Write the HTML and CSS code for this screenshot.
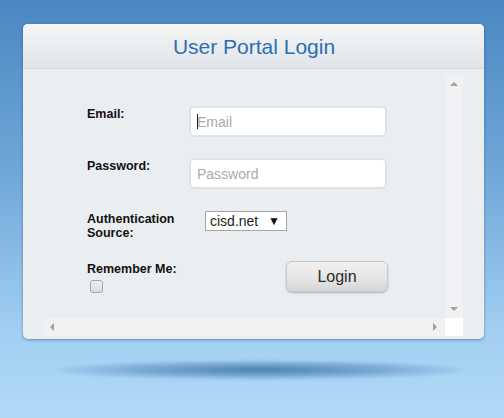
FILE: index.html
```html
<!DOCTYPE html>
<html>
<head>
<meta charset="utf-8">
<link rel="stylesheet" href="styles.css">
</head>
<body>
<div class="stage">
  <div class="card">
    <div class="card-header"><h1 class="title">User Portal Login</h1></div>
    <div class="card-body">
      <div class="scroller">
        <form class="content">
          <div class="row row-email">
            <label class="label">Email:</label>
            <span class="field caret-wrap"><input class="text-input" type="text" placeholder="Email"></span>
          </div>
          <div class="row row-pass">
            <label class="label">Password:</label>
            <span class="field"><input class="text-input" type="password" placeholder="Password"></span>
          </div>
          <div class="row row-auth">
            <label class="label">Authentication<br>Source:</label>
            <span class="field"><span class="select"><span class="select-text">cisd.net</span><span class="select-arrow">▼</span></span></span>
          </div>
          <div class="row row-remember">
            <div class="label">Remember Me:<span class="checkbox"></span></div>
            <span class="field field-btn"><button type="button" class="btn">Login</button></span>
          </div>
        </form>
        <div class="vbar"><span class="arr arr-up"></span><span class="arr arr-down"></span></div>
        <div class="hbar"><span class="arr arr-left"></span><span class="arr arr-right"></span></div>
        <div class="corner"></div>
      </div>
    </div>
  </div>
  <div class="floor-shadow"></div>
</div>
</body>
</html>
```
FILE: styles.css
```css
html, body {
  margin: 0;
  padding: 0;
}
body {
  width: 504px;
  height: 418px;
  overflow: hidden;
  background: linear-gradient(to bottom, #4a87c2 0%, #6fa6d8 40%, #a3cff2 80%, #afdaf8 100%);
  font-family: "Liberation Sans", Arial, sans-serif;
}
.stage {
  padding: 24px 0 0 23px;
}
.card {
  width: 461px;
  height: 315px;
  box-sizing: border-box;
  border-radius: 5px;
  background: #ebeef1;
  box-shadow: 0 1px 3px rgba(20, 50, 90, 0.45);
  overflow: hidden;
}
.card-header {
  height: 44px;
  border-bottom: 1px solid #d3d9df;
  background: linear-gradient(to bottom, #f4f5f7 0%, #e9ecef 60%, #dfe3e7 100%);
  display: flex;
  align-items: center;
  justify-content: center;
}
.title {
  margin: 0;
  font-weight: normal;
  font-size: 21px;
  color: #2f6db3;
  padding-left: 1px;
  padding-top: 2px;
}
.card-body {
  padding: 6px 21px 3px 21px;
}
.scroller {
  display: grid;
  grid-template-columns: 401px 18px;
  grid-template-rows: 243px 18px;
}
.content {
  margin: 0;
  padding: 31px 0 0 43px;
  display: flex;
  flex-direction: column;
}
.row {
  display: grid;
  grid-template-columns: 102px 198px;
  align-items: start;
}
.label {
  font-size: 12.5px;
  font-weight: bold;
  line-height: 14px;
  color: #111;
  padding-top: 1px;
}
.row-pass { margin-top: 21px; }
.row-auth { margin-top: 22px; }
.row-auth .label { padding-top: 1px; }
.row-remember { margin-top: 21px; }
.row-remember .label { padding-top: 1px; }
.field {
  display: block;
}
.caret-wrap {
  position: relative;
}
.caret-wrap::after {
  content: "";
  position: absolute;
  left: 8px;
  top: 8px;
  width: 1px;
  height: 15px;
  background: #222;
}
.text-input {
  display: block;
  width: 198px;
  height: 31px;
  box-sizing: border-box;
  border: 2px solid #e0e3e6;
  border-radius: 5px;
  background: #fff;
  padding: 0 0 0 6px;
  font-family: "Liberation Sans", Arial, sans-serif;
  font-size: 14px;
  color: #333;
  outline: none;
}
.text-input::placeholder {
  color: #a9a9a9;
}
.select {
  margin-left: 16px;
  width: 82px;
  height: 20px;
  box-sizing: border-box;
  border: 1px solid #a6a6a6;
  background: #fff;
  display: flex;
  align-items: center;
  justify-content: space-between;
  padding: 0 6px 0 4px;
  font-size: 14px;
  color: #1e1e1e;
}
.select-arrow {
  font-size: 12px;
  color: #111;
}
.checkbox {
  display: block;
  width: 11px;
  height: 11px;
  margin: 4px 0 0 3px;
  border: 1px solid #a8a8a8;
  border-radius: 3px;
  background: linear-gradient(to bottom, #f0f0f0, #dcdcdc);
}
.field-btn {
  display: flex;
  justify-content: flex-end;
  margin-right: -1px;
}
.btn {
  width: 102px;
  height: 31px;
  border: 1px solid #c9c9c9;
  border-radius: 6px;
  background: linear-gradient(to bottom, #f1f1f1 0%, #e4e4e4 60%, #d6d6d6 100%);
  box-shadow: 0 1px 2px rgba(0, 0, 0, 0.25);
  font-family: "Liberation Sans", Arial, sans-serif;
  font-size: 16px;
  color: #2b2b2b;
  padding: 0;
}
.vbar {
  background: #f0f1f2;
  display: flex;
  flex-direction: column;
  justify-content: space-between;
  align-items: center;
  padding: 7px 0 7px 0;
}
.hbar {
  background: #f0f1f2;
  display: flex;
  justify-content: space-between;
  align-items: center;
  padding: 0 8px 0 6px;
}
.corner {
  background: #fff;
}
.arr {
  display: block;
  width: 0;
  height: 0;
  border-style: solid;
  border-color: transparent;
}
.arr-up {
  border-width: 0 4px 4px 4px;
  border-bottom-color: #a0a0a0;
}
.arr-down {
  border-width: 4px 4px 0 4px;
  border-top-color: #a0a0a0;
}
.arr-left {
  border-width: 4px 4px 4px 0;
  border-right-color: #a0a0a0;
}
.arr-right {
  border-width: 4px 0 4px 4px;
  border-left-color: #a0a0a0;
}
.floor-shadow {
  width: 410px;
  height: 20px;
  margin: 21px 0 0 32px;
  border-radius: 50%;
  background: radial-gradient(ellipse at center, rgba(50, 100, 150, 0.75) 0%, rgba(60, 115, 170, 0.45) 40%, rgba(80, 140, 200, 0) 75%);
  filter: blur(1px);
}
```
